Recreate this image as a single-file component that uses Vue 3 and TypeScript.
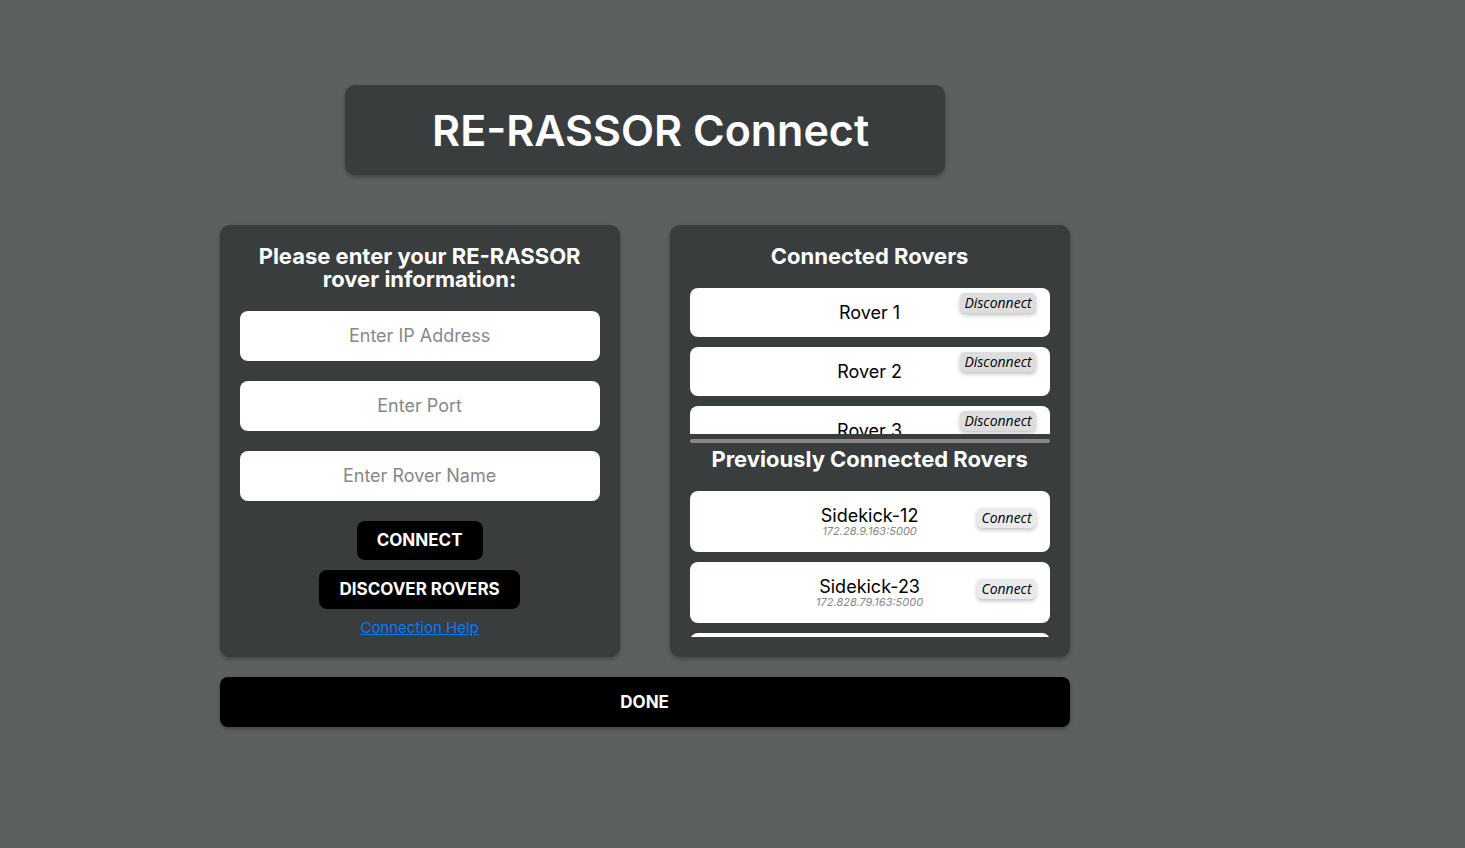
<script setup lang="ts">
import { reactive } from 'vue'

interface Field {
  id: 'ip' | 'port' | 'name'
  label: string
}

interface PreviousRover {
  name: string
  address: string
}

const fields: Field[] = [
  { id: 'ip', label: 'Enter IP Address' },
  { id: 'port', label: 'Enter Port' },
  { id: 'name', label: 'Enter Rover Name' },
]

const form = reactive({ ip: '', port: '', name: '' })

const connected: string[] = ['Rover 1', 'Rover 2', 'Rover 3']

const previous: PreviousRover[] = [
  { name: 'Sidekick-12', address: '172.28.9.163:5000' },
  { name: 'Sidekick-23', address: '172.828.79.163:5000' },
]
</script>

<template>
  <main class="screen">
    <div class="content">
      <header class="title-card">
        <h1>RE-RASSOR Connect</h1>
      </header>

      <div class="panels">
        <form class="panel" @submit.prevent>
          <h2>Please enter your RE-RASSOR<br />rover information:</h2>
          <input
            v-for="field in fields"
            :key="field.id"
            v-model="form[field.id]"
            class="field"
            type="text"
            :name="field.id"
            :placeholder="field.label"
            :aria-label="field.label"
          />
          <div class="actions">
            <button class="action" type="submit">CONNECT</button>
            <button class="action" type="button">DISCOVER ROVERS</button>
            <a class="help" href="#help">Connection Help</a>
          </div>
        </form>

        <div class="panel">
          <h2>Connected Rovers</h2>
          <ul class="list">
            <li v-for="rover in connected" :key="rover" class="rover">
              <span>{{ rover }}</span>
              <button class="tag disconnect" type="button">Disconnect</button>
            </li>
          </ul>
          <hr />
          <h2>Previously Connected Rovers</h2>
          <ul class="list">
            <li v-for="rover in previous" :key="rover.name" class="rover saved">
              <span>{{ rover.name }}</span>
              <em>{{ rover.address }}</em>
              <button class="tag connect" type="button">Connect</button>
            </li>
            <li class="rover saved"></li>
          </ul>
        </div>
      </div>

      <button class="done" type="button">DONE</button>
    </div>
  </main>
</template>

<style>
body {
  margin: 0;
  background: #5d6061;
}
</style>

<style scoped>
.screen {
  box-sizing: border-box;
  min-height: 100vh;
  padding: 85px 12% 85px 0;
  background: #5d6061;
  color: #fff;
  font-family: Inter, "DejaVu Sans", sans-serif;
}

.content {
  display: flex;
  flex-direction: column;
  width: 100%;
  max-width: 850px;
  margin: 0 auto;
}

.title-card {
  box-sizing: border-box;
  width: 100%;
  max-width: 600px;
  margin: 0 auto 50px;
  padding: 20px 20px 20px 32px;
  border-radius: 10px;
  background: #3a3d3e;
  box-shadow: 0 2px 4px rgba(0, 0, 0, 0.3);
  text-align: center;
}

h1 {
  margin: 0;
  font-size: 43px;
  font-weight: 600;
  line-height: 50px;
}

.panels {
  display: grid;
  grid-template-columns: 1fr 1fr;
  gap: 50px;
  margin-bottom: 20px;
}

.panel {
  display: flex;
  flex-direction: column;
  min-width: 0;
  padding: 20px;
  border-radius: 10px;
  background: #3a3d3e;
  box-shadow: 0 2px 4px rgba(0, 0, 0, 0.3);
}

h2 {
  margin: 0 0 20px;
  font-size: 22px;
  font-weight: 700;
  line-height: 23px;
  text-align: center;
}

.field {
  box-sizing: border-box;
  width: 100%;
  height: 50px;
  margin: 0 0 20px;
  padding: 0 10px 2px;
  border: 0;
  border-radius: 8px;
  background: #fff;
  color: #000;
  font: 18px Inter, "DejaVu Sans", sans-serif;
  text-align: center;
}

.field::placeholder {
  color: #888;
  opacity: 1;
}

.actions {
  display: flex;
  flex-direction: column;
  align-items: center;
  gap: 10px;
}

.action,
.done {
  border: 0;
  border-radius: 8px;
  background: #000;
  color: #fff;
  font: 700 17px/19px Inter, "DejaVu Sans", sans-serif;
  cursor: pointer;
}

.action {
  padding: 10px 20px;
}

.done {
  height: 50px;
  box-shadow: 0 2px 4px rgba(0, 0, 0, 0.3);
}

.help {
  color: #007bff;
  font-size: 15px;
  line-height: 18px;
  text-decoration: underline;
}

.list {
  display: flex;
  flex-direction: column;
  gap: 10px;
  height: 146px;
  margin: 0;
  padding: 0;
  overflow-y: auto;
  scrollbar-width: none;
  list-style: none;
}

.rover {
  position: relative;
  display: flex;
  flex: none;
  flex-direction: column;
  align-items: center;
  box-sizing: border-box;
  min-height: 49px;
  padding: 15px;
  border-radius: 8px;
  background: #fff;
  color: #000;
  font-size: 18px;
  line-height: 19px;
}

.saved {
  min-height: 61px;
}

.rover em {
  color: #888;
  font-size: 11px;
  line-height: 12px;
}

.tag {
  position: absolute;
  right: 14px;
  padding: 0 4px;
  border: 0;
  border-radius: 5px;
  color: #000;
  font: italic 14px/20px "Open Sans", "Noto Sans", sans-serif;
  box-shadow: 0 2px 4px rgba(0, 0, 0, 0.25);
  cursor: pointer;
}

.disconnect {
  top: 5px;
  background: #ddd;
}

.connect {
  top: 17px;
  background: #eaeaea;
}

hr {
  width: 100%;
  height: 4px;
  margin: 5px 0;
  border: 0;
  border-radius: 2px;
  background: #888;
}
</style>
